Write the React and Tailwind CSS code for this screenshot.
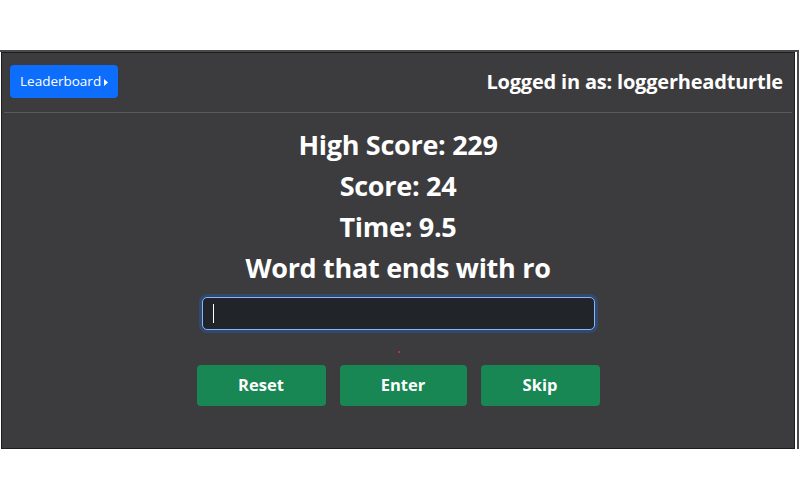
import React from 'react';

const font = { fontFamily: '"Open Sans", "Noto Sans", sans-serif' };

export default function App() {
  return (
    <div className="w-[800px] h-[500px] bg-white overflow-hidden" style={font}>
      <div className="pt-[50px]">
        <div className="w-[799px] h-[399px] border-t-2 border-r-2 border-[#4a4a4a] bg-white pr-[2px] flex">
          <div className="flex-1 ml-[1px] bg-[#3c3c3e] border border-[#1e1e1e] flex flex-col">
            {/* Top bar */}
            <div className="flex items-center justify-between pl-[6px] pr-[9px] pt-[12px] pb-[14px] border-b border-[#5a5a5a] mx-[2px]">
              <button className="flex items-center gap-[3px] bg-[#0d6efd] text-white text-[13.5px] rounded-[4px] h-[33px] px-[10px]">
                Leaderboard
                <svg width="4" height="7" viewBox="0 0 4 7" className="mt-[1px]">
                  <path d="M0 0 L4 3.5 L0 7 Z" fill="white" />
                </svg>
              </button>
              <span className="text-white text-[20px] font-bold tracking-[-0.2px]">Logged in as: loggerheadturtle</span>
            </div>

            {/* Game */}
            <div className="flex flex-col items-center text-white font-bold text-[27px] tracking-[-0.3px] leading-[41px] pt-[11px]">
              <div>High Score: 229</div>
              <div>Score: 24</div>
              <div>Time: 9.5</div>
              <div>Word that ends with ro</div>
            </div>

            <div className="flex justify-center mt-[9px]">
              <div className="w-[393px] h-[33px] rounded-[5px] bg-[#212529] border border-[#86b7fe] shadow-[0_0_0_3px_rgba(13,110,253,0.25)] flex items-center pl-[10px]">
                <div className="w-[1px] h-[19px] bg-white" />
              </div>
            </div>

            <div className="flex justify-center mt-[21px] pl-[1px]">
              <div className="w-[2px] h-[2px] bg-[#d4204a]" />
            </div>

            <div className="flex justify-center gap-[14px] mt-[12px] text-white font-bold text-[16.5px]">
              <button className="w-[129px] h-[41px] rounded-[4px] bg-[#198754]">Reset</button>
              <button className="w-[127px] h-[41px] rounded-[4px] bg-[#198754]">Enter</button>
              <button className="w-[119px] h-[41px] rounded-[4px] bg-[#198754]">Skip</button>
            </div>
          </div>
        </div>
      </div>
    </div>
  );
}
